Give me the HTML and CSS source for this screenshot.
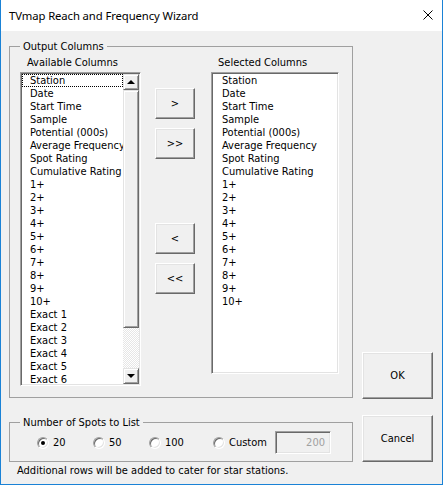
FILE: index.html
```html
<!DOCTYPE html>
<html lang="en">
<head>
  <meta charset="UTF-8"/>
  <title>TVmap Reach and Frequency Wizard</title>
  <link rel="stylesheet" href="styles.css">
</head>
<body>
  <div class="window">
    <div class="titlebar">
      <span class="title">TVmap Reach and Frequency Wizard</span>
      <svg class="close" width="10" height="10" viewBox="0 0 10 10">
        <path d="M0.5 0.5 L9.5 9.5 M9.5 0.5 L0.5 9.5" stroke="#000" stroke-width="1"/>
      </svg>
    </div>
    <div class="client">
      <div class="main">
        <fieldset class="group output">
          <legend>Output Columns</legend>
          <div class="columns">
            <div class="col-list">
              <div class="label">Available Columns</div>
              <div class="listbox available">
                <ul class="items">
                  <li class="focused">Station</li>
                  <li>Date</li>
                  <li>Start Time</li>
                  <li>Sample</li>
                  <li>Potential (000s)</li>
                  <li>Average Frequency</li>
                  <li>Spot Rating</li>
                  <li>Cumulative Rating</li>
                  <li>1+</li>
                  <li>2+</li>
                  <li>3+</li>
                  <li>4+</li>
                  <li>5+</li>
                  <li>6+</li>
                  <li>7+</li>
                  <li>8+</li>
                  <li>9+</li>
                  <li>10+</li>
                  <li>Exact 1</li>
                  <li>Exact 2</li>
                  <li>Exact 3</li>
                  <li>Exact 4</li>
                  <li>Exact 5</li>
                  <li>Exact 6</li>
                </ul>
                <div class="scrollbar">
                  <div class="sb-btn"><span class="arrow up"></span></div>
                  <div class="sb-thumb"></div>
                  <div class="sb-track"></div>
                  <div class="sb-btn"><span class="arrow down"></span></div>
                </div>
              </div>
            </div>
            <div class="movers">
              <button class="btn move">&gt;</button>
              <button class="btn move">&gt;&gt;</button>
              <button class="btn move gap">&lt;</button>
              <button class="btn move">&lt;&lt;</button>
            </div>
            <div class="col-list">
              <div class="label">Selected Columns</div>
              <div class="listbox selected">
                <ul class="items">
                  <li>Station</li>
                  <li>Date</li>
                  <li>Start Time</li>
                  <li>Sample</li>
                  <li>Potential (000s)</li>
                  <li>Average Frequency</li>
                  <li>Spot Rating</li>
                  <li>Cumulative Rating</li>
                  <li>1+</li>
                  <li>2+</li>
                  <li>3+</li>
                  <li>4+</li>
                  <li>5+</li>
                  <li>6+</li>
                  <li>7+</li>
                  <li>8+</li>
                  <li>9+</li>
                  <li>10+</li>
                </ul>
              </div>
            </div>
          </div>
        </fieldset>

        <fieldset class="group spots">
          <legend>Number of Spots to List</legend>
          <div class="options">
            <label class="opt"><span class="radio"><span class="dot"></span></span>20</label>
            <label class="opt"><span class="radio"></span>50</label>
            <label class="opt"><span class="radio"></span>100</label>
            <label class="opt"><span class="radio"></span>Custom</label>
            <div class="textbox">200</div>
          </div>
        </fieldset>

        <p class="note">Additional rows will be added to cater for star stations.</p>
      </div>

      <div class="actions">
        <button class="btn big">OK</button>
        <button class="btn big">Cancel</button>
      </div>
    </div>
  </div>
</body>
</html>
```

FILE: styles.css
```css
body {
  margin: 0;
  background: #fff;
  font-family: "DejaVu Sans Condensed", "Liberation Sans", sans-serif;
  font-size: 11px;
  color: #000;
}
.window {
  width: 443px;
  height: 485px;
  box-sizing: border-box;
  border: 1px solid #1a82d6;
  border-top: none;
  display: flex;
  flex-direction: column;
}
.titlebar {
  height: 31px;
  background: #fff;
  display: flex;
  align-items: center;
  justify-content: space-between;
  padding: 0 9px 1px 8px;
  box-sizing: border-box;
}
.title {
  font-family: "Noto Sans", sans-serif;
  font-size: 11.3px;
  letter-spacing: -0.1px;
}
.client {
  flex: 1;
  background: #f0f0f0;
  display: flex;
  padding-left: 8px;
}
.main {
  width: 344px;
}

/* group boxes */
.group {
  margin: 0;
  border: 1px solid #a0a0a0;
  min-width: 0;
}
.group legend {
  padding: 0 3px;
  line-height: 13px;
}
.output {
  margin-top: 9px;
  padding: 3px 12px 11px 10px;
}
.columns {
  display: flex;
}
.label {
  line-height: 13px;
  padding-left: 7px;
  margin-bottom: 3px;
}

/* list boxes */
.listbox {
  display: flex;
  background: #fff;
  border: 1px solid;
  border-color: #a0a0a0 #fff #fff #a0a0a0;
  box-shadow: inset 1px 1px #696969, inset -1px -1px #e3e3e3;
  padding: 1px;
  box-sizing: border-box;
  overflow: hidden;
}
.available {
  width: 121px;
  height: 314px;
}
.selected {
  width: 128px;
  height: 302px;
}
.items {
  list-style: none;
  margin: 0;
  padding: 0;
  flex: 1;
  min-width: 0;
  overflow: hidden;
}
.items li {
  line-height: 13px;
  padding-left: 8px;
  white-space: nowrap;
}
.selected .items li {
  padding-left: 9px;
}
.items li.focused {
  outline: 1px dotted #000;
  outline-offset: -1px;
}

/* scrollbar */
.scrollbar {
  width: 16px;
  display: flex;
  flex-direction: column;
}
.sb-btn, .sb-thumb {
  background: #f0f0f0;
  border: 1px solid;
  border-color: #e3e3e3 #696969 #696969 #e3e3e3;
  box-shadow: inset 1px 1px #fff, inset -1px -1px #a0a0a0;
  box-sizing: border-box;
}
.sb-btn {
  height: 16px;
  display: flex;
  align-items: center;
  justify-content: center;
}
.sb-thumb {
  height: 238px;
}
.sb-track {
  flex: 1;
  background: repeating-conic-gradient(#fff 0 25%, #e6e6e6 0 50%) 0 0 / 2px 2px;
}
.arrow {
  width: 0;
  height: 0;
  border-left: 4px solid transparent;
  border-right: 4px solid transparent;
}
.arrow.up {
  border-bottom: 4px solid #000;
}
.arrow.down {
  border-top: 4px solid #000;
}

/* buttons */
.btn {
  font: inherit;
  color: #000;
  background: #f0f0f0;
  border: 1px solid;
  border-color: #fff #696969 #696969 #fff;
  box-shadow: inset -1px -1px #a0a0a0, inset 1px 1px #e3e3e3;
  padding: 0;
  box-sizing: border-box;
}
.movers {
  display: flex;
  flex-direction: column;
  margin: 0 16px 0 14px;
  padding-top: 32px;
  gap: 9px;
}
.move {
  width: 40px;
  height: 31px;
}
.move.gap {
  margin-top: 55px;
}
.actions {
  display: flex;
  flex-direction: column;
  justify-content: flex-end;
  gap: 16px;
  margin-left: 9px;
  padding-bottom: 22px;
}
.big {
  width: 71px;
  height: 47px;
}

/* spots */
.spots {
  margin-top: 18px;
  padding: 2px 12px 7px 10px;
}
.options {
  display: flex;
  align-items: center;
  height: 23px;
}
.opt {
  display: flex;
  align-items: center;
  gap: 4px;
}
.opt:nth-child(1) { width: 56px; margin-left: 17px; }
.opt:nth-child(2) { width: 56px; }
.opt:nth-child(3) { width: 64px; }
.opt:nth-child(4) { width: 62px; }
.radio {
  width: 12px;
  height: 12px;
  border-radius: 50%;
  border: 1px solid;
  border-color: #a0a0a0 #fff #fff #a0a0a0;
  box-shadow: inset 1px 1px #696969, inset -1px -1px #e3e3e3;
  background: #fff;
  box-sizing: border-box;
  display: flex;
  align-items: center;
  justify-content: center;
}
.dot {
  width: 4px;
  height: 4px;
  border-radius: 50%;
  background: #000;
}
.textbox {
  width: 56px;
  height: 23px;
  box-sizing: border-box;
  border: 1px solid;
  border-color: #a0a0a0 #fff #fff #a0a0a0;
  box-shadow: inset 1px 1px #696969, inset -1px -1px #e3e3e3;
  background: #f0f0f0;
  color: #a0a0a0;
  text-align: right;
  line-height: 21px;
  padding-right: 5px;
}
.note {
  margin: 2px 0 0 8px;
  line-height: 13px;
}
```
